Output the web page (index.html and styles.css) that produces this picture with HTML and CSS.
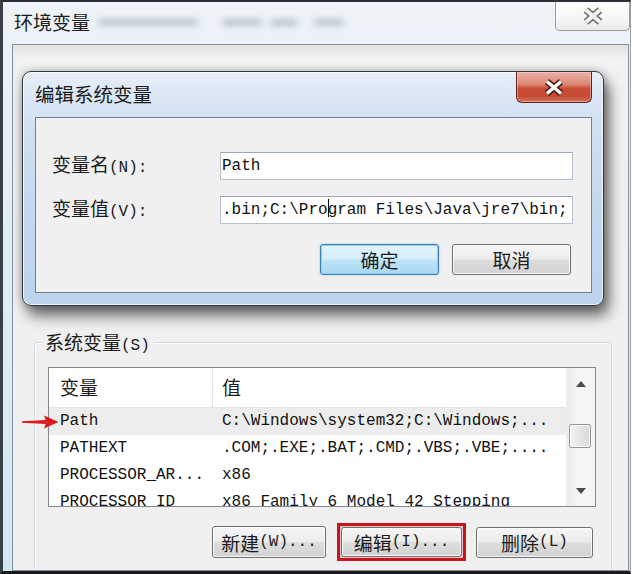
FILE: index.html
```html
<!DOCTYPE html>
<html lang="zh-CN">
<head>
<meta charset="utf-8">
<title>环境变量</title>
<link rel="stylesheet" href="styles.css">
</head>
<body>
<div class="window">
  <div class="titlebar">
    <span class="caption">环境变量</span>
    <span class="blurs"><i class="b1"></i><i class="b2"></i><i class="b3"></i><i class="b4"></i></span>
    <button class="close-outer" aria-label="关闭">
      <svg width="22" height="18" viewBox="0 0 22 18"><path d="M4 3 L18 15 M18 3 L4 15" stroke="#6f6f6f" stroke-width="7"/><path d="M4 3 L18 15 M18 3 L4 15" stroke="#f2f2f2" stroke-width="4"/></svg>
    </button>
  </div>
  <div class="content">
    <div class="dialog">
      <div class="dlg-title">
        <span class="dlg-caption">编辑系统变量</span>
        <button class="close-red" aria-label="关闭">
          <svg width="22" height="17" viewBox="0 0 22 17"><path d="M4 2.5 L18 14.5 M18 2.5 L4 14.5" stroke="#4b1c17" stroke-width="6.4"/><path d="M4 2.5 L18 14.5 M18 2.5 L4 14.5" stroke="#ffffff" stroke-width="3.4"/></svg>
        </button>
      </div>
      <div class="dlg-body">
        <div class="field">
          <label class="lbl">变量名<span class="m">(N):</span></label>
          <div class="input m">Path</div>
        </div>
        <div class="field field2">
          <label class="lbl">变量值<span class="m">(V):</span></label>
          <div class="input m">.bin;C:\Pro<span class="caret"></span>gram Files\Java\jre7\bin;</div>
        </div>
        <div class="dlg-buttons">
          <button class="btn btn-default">确定</button>
          <button class="btn">取消</button>
        </div>
      </div>
    </div>

    <div class="group">
      <div class="legend">系统变量<span class="m">(S)</span></div>
      <div class="list">
        <div class="list-main">
          <div class="list-head"><div class="c1">变量</div><div class="c2">值</div></div>
          <div class="row sel"><div class="c1 m">Path</div><div class="c2 m">C:\Windows\system32;C:\Windows;...</div></div>
          <div class="row"><div class="c1 m">PATHEXT</div><div class="c2 m">.COM;.EXE;.BAT;.CMD;.VBS;.VBE;....</div></div>
          <div class="row"><div class="c1 m">PROCESSOR_AR...</div><div class="c2 m">x86</div></div>
          <div class="row"><div class="c1 m">PROCESSOR_ID</div><div class="c2 m">x86 Family 6 Model 42 Stepping</div></div>
        </div>
        <div class="vscroll">
          <div class="sarrow"><svg width="10" height="6" viewBox="0 0 10 6"><path d="M0 6 L5 0 L10 6 Z" fill="#4a4a4a"/></svg></div>
          <div class="thumb"></div>
          <div class="sfill"></div>
          <div class="sarrow down"><svg width="10" height="6" viewBox="0 0 10 6"><path d="M0 0 L5 6 L10 0 Z" fill="#4a4a4a"/></svg></div>
        </div>
        <svg class="red-arrow" width="37" height="14" viewBox="0 0 37 14"><path d="M0 6.2 L24 5 L24 9 L0 7.8 Z" fill="#e0181d"/><path d="M22 0.5 L36.5 7 L22 13.5 L24.5 7 Z" fill="#e0181d"/></svg>
      </div>
      <div class="group-buttons">
        <button class="btn btn-w114">新建<span class="m">(W)...</span></button>
        <div class="highlight"><button class="btn btn-in">编辑<span class="m">(I)...</span></button></div>
        <button class="btn btn-w117">删除<span class="m">(L)</span></button>
      </div>
    </div>
  </div>
</div>
</body>
</html>
```

FILE: styles.css
```css
* { box-sizing: border-box; }
html, body { margin: 0; padding: 0; background: #ffffff; }
body {
  width: 634px;
  height: 574px;
  overflow: hidden;
  font-family: "Noto Sans CJK SC", "Liberation Sans", sans-serif;
  color: #1b1b1b;
}
button { font: inherit; color: inherit; }
.m { font-family: "Liberation Mono", "Noto Sans CJK SC", monospace; font-size: 16px; }

.window {
  width: 631px;
  height: 574px;
  border-style: solid;
  border-width: 2px 1px 3px 3px;
  border-color: #2c3036 #9aa0a6 #1a1a1a #3a4047;
  padding: 0 1px 0 9px;
  background: linear-gradient(to bottom, #eef3f7 0%, #e4eff5 30%, #d0e8f1 100%);
  display: flex;
  flex-direction: column;
}

.titlebar {
  height: 42px;
  display: flex;
  align-items: flex-start;
  position: relative;
}
.caption {
  font-size: 19px;
  line-height: 28px;
  padding: 6px 0 0 2px;
  color: #1b1b1b;
}
.blurs { flex: 1; display: flex; align-items: center; height: 40px; padding-left: 8px; }
.blurs i { display: block; height: 7px; background: #8d98a6; filter: blur(3px); opacity: .5; border-radius: 4px; }
.blurs .b1 { width: 100px; }
.blurs .b2 { width: 40px; margin-left: 24px; }
.blurs .b3 { width: 28px; margin-left: 8px; }
.blurs .b4 { width: 30px; margin-left: 16px; }
.close-outer {
  width: 75px;
  height: 29px;
  margin-right: -1px;
  border: 1px solid #9c9c9c;
  border-top: none;
  border-radius: 0 0 5px 5px;
  background: linear-gradient(to bottom, #ffffff, #f5f5f5 60%, #ebebeb);
  display: flex;
  align-items: center;
  justify-content: center;
  padding: 0;
}

.content {
  height: 527px;
  border: 1px solid #83909f;
  background: linear-gradient(to bottom, #e2e2e2 0, #f3f3f3 14px, #f0f0f0 60px);
  overflow: hidden;
}

/* edit dialog */
.dialog {
  width: 582px;
  height: 235px;
  margin: 26px 0 0 9px;
  border: 1px solid #2f3944;
  border-radius: 9px;
  background: linear-gradient(to bottom, #e6eef8 0%, #d3e2f2 20%, #c4d8ee 60%, #bcd3ec 100%);
  box-shadow: inset 0 0 0 1px rgba(255,255,255,.75), 0 0 10px rgba(0,0,0,.28), 5px 10px 14px rgba(0,0,0,.55);
}
.dlg-title {
  height: 45px;
  display: flex;
  justify-content: space-between;
  align-items: flex-start;
  padding: 0 11px 0 12px;
}
.dlg-caption {
  font-size: 19.5px;
  line-height: 28px;
  padding-top: 8px;
  color: #1b1b1b;
}
.close-red {
  width: 76px;
  height: 31px;
  margin-top: 0;
  padding: 0;
  border: 1px solid #5b241e;
  border-top: none;
  border-radius: 0 0 6px 6px;
  background: linear-gradient(to bottom, #eab0a4 0%, #dd8a78 40%, #c94c36 55%, #c44a33 80%, #d8755d 100%);
  box-shadow: inset 0 0 0 1px rgba(255,220,210,.45);
  display: flex;
  align-items: center;
  justify-content: center;
}
.dlg-body {
  height: 176px;
  margin: 0 11px 0 12px;
  border: 1px solid #71808f;
  background: #f0f0f0;
  padding: 32px 18px 17px 16px;
}
.field {
  display: grid;
  grid-template-columns: 168px 1fr;
  align-items: center;
  height: 28px;
}
.field2 { margin-top: 16px; }
.lbl { font-size: 19px; line-height: 28px; color: #1b1b1b; white-space: nowrap; }
.input {
  height: 28px;
  border: 1px solid #b5c1cd;
  border-top-color: #9aa7b5;
  background: #ffffff;
  padding-left: 1px;
  line-height: 26px;
  white-space: nowrap;
  overflow: hidden;
  color: #111;
}
.caret {
  display: inline-block;
  width: 1px;
  height: 18px;
  margin-right: -1px;
  background: #000;
  vertical-align: -3px;
}
.dlg-buttons {
  margin-top: 22px;
  display: flex;
  justify-content: flex-end;
  gap: 13px;
  padding-right: 2px;
}

.btn {
  height: 31px;
  width: 119px;
  border: 1px solid #707070;
  border-radius: 3px;
  background: linear-gradient(to bottom, #f6f6f6 0%, #ececec 48%, #dddddd 52%, #d2d2d2 100%);
  box-shadow: inset 0 0 0 1px rgba(255,255,255,.8);
  font-size: 19px;
  line-height: 29px;
  padding: 0;
  display: flex;
  align-items: center;
  justify-content: center;
  white-space: nowrap;
  color: #1b1b1b;
}
.btn-default {
  border-color: #3c7fb1;
  background: linear-gradient(to bottom, #e5f4fc 0%, #d4edfb 48%, #bde3f8 52%, #a9d8f3 100%);
  box-shadow: inset 0 0 0 1px #8fd0f2, 0 0 2px rgba(60,127,177,.5);
}

/* group box */
.group {
  width: 578px;
  height: 260px;
  margin: 36px 0 0 21px;
  border: 1px solid #d0dae1;
  border-radius: 3px;
  box-shadow: inset 1px 1px 0 #ffffff;
  padding: 0 15px 0 13px;
}
.legend {
  width: max-content;
  margin: -12px 0 0 -5px;
  padding: 0 4px 0 2px;
  background: #f0f0f0;
  font-size: 19px;
  line-height: 22px;
  color: #1b1b1b;
}
.list {
  position: relative;
  margin-top: 10px;
  height: 140px;
  border: 1px solid #828790;
  background: #ffffff;
  display: flex;
}
.list-main { flex: 1; overflow: hidden; }
.list-head {
  height: 40px;
  display: flex;
  align-items: stretch;
  border-bottom: 1px solid #e3e3e3;
}
.list-head .c1, .list-head .c2 {
  font-size: 19px;
  display: flex;
  align-items: center;
  padding-bottom: 2px;
}
.c1 { width: 163px; padding-left: 11px; white-space: nowrap; }
.c2 { flex: 1; padding-left: 10px; white-space: nowrap; }
.list-head .c2 { border-left: 1px solid #e3e3e3; padding-left: 9px; }
.row { height: 27px; line-height: 27px; display: flex; color: #111; }
.row.sel { background: #ededed; }

.vscroll {
  width: 29px;
  background: linear-gradient(to right, #ececec, #f7f7f7 40%, #f4f4f4);
  border-left: 1px solid #ededed;
  display: flex;
  flex-direction: column;
}
.sarrow { height: 32px; display: flex; align-items: center; justify-content: center; }
.sarrow.down { height: 30px; }
.thumb {
  margin: 24px 4px 0 2px;
  height: 24px;
  border: 1px solid #979797;
  border-radius: 2px;
  background: linear-gradient(to right, #f4f4f4, #e6e6e6 50%, #d9d9d9);
  box-shadow: inset 0 0 0 1px rgba(255,255,255,.8);
}
.sfill { flex: 1; }

.red-arrow {
  position: absolute;
  left: -27px;
  top: 47px;
}

.group-buttons {
  margin-top: 16px;
  display: flex;
  justify-content: flex-end;
  align-items: center;
  padding-right: 3px;
}
.btn-w114 { width: 114px; height: 32px; }
.btn-w117 { width: 117px; margin-left: 10px; }
.highlight {
  margin-left: 11px;
  border: 3px solid #c9141d;
  padding: 1px;
  width: 129px;
  height: 38px;
  background: #e8c4c4;
}
.btn-in { width: 100%; height: 100%; }
```
